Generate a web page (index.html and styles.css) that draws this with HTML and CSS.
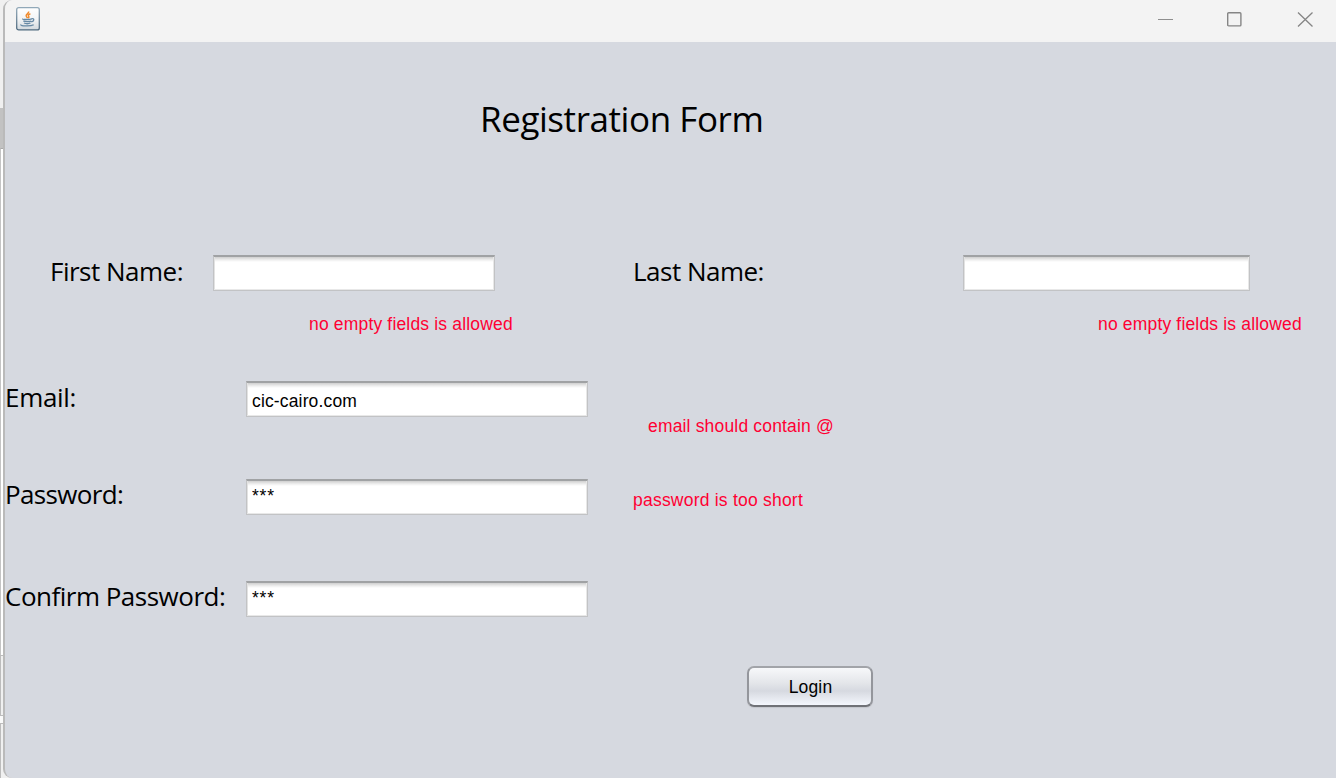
FILE: index.html
```html
<!DOCTYPE html>
<html lang="en">
<head>
<meta charset="utf-8">
<title>Registration Form</title>
<link rel="stylesheet" href="styles.css">
</head>
<body>
<div class="desktop">
  <div class="behind">
    <div class="behind-top"><i></i><i></i><i></i><i></i></div>
    <div class="behind-tab"></div>
    <div class="behind-editor"></div>
    <div class="behind-panel"></div>
    <div class="behind-gap"></div>
    <div class="behind-bottom"></div>
  </div>
  <div class="window">
    <header class="titlebar">
      <svg class="java" width="24" height="24" viewBox="0 0 24 24" fill="none">
        <defs>
          <linearGradient id="tile" x1="0" y1="0" x2="0" y2="1">
            <stop offset="0" stop-color="#ffffff"/><stop offset=".5" stop-color="#f3f5f6"/><stop offset="1" stop-color="#d2d9de"/>
          </linearGradient>
          <linearGradient id="edge" x1="0" y1="0" x2="0" y2="1">
            <stop offset="0" stop-color="#91a8b8"/><stop offset="1" stop-color="#4e697e"/>
          </linearGradient>
        </defs>
        <rect x=".7" y=".7" width="22.6" height="22.2" rx="2" fill="url(#tile)" stroke="url(#edge)" stroke-width="1.3"/>
        <path d="M12.600 4.500c.8 2-3.600 2.900-2.300 4.800l1.300 1.900M14.400 6.800c-2 .8-2.700 1.400-1.700 2.500.5.700.2 1.300-.4 1.900" stroke="#f08a2c" stroke-width="1.500"/>
        <path d="M7 11.800c-2 .8 6 1 9 .1M7.300 14c1.500.8 6 .7 8 .1M8 16c1.500.7 5 .7 6.500 0M15.500 11.600c3.400-.5 2.700 2.600-.2 3.300M5.200 17.600c-2 1.500 9.500 2 12.500.2" stroke="#6689a5" stroke-width="1.300"/>
      </svg>
      <div class="controls">
        <svg width="16" height="16" viewBox="0 0 16 16"><path d="M1 8.500h15" stroke="#8e8e8e"/></svg>
        <svg width="16" height="16" viewBox="0 0 16 16"><rect x="1.700" y="1.700" width="13.200" height="13.200" rx="1" fill="none" stroke="#858585" stroke-width="1.400"/></svg>
        <svg width="16" height="16" viewBox="0 0 16 16"><path d="M1 1.500l14.500 14M15.500 1.500L1 15.500" stroke="#858585" stroke-width="1.300"/></svg>
      </div>
    </header>
    <form class="form">
      <h1 class="title">Registration Form</h1>
      <div class="row names">
        <label class="label first-label" for="first">First Name:</label>
        <input class="field first" id="first" type="text">
        <label class="label last-label" for="last">Last Name:</label>
        <input class="field last" id="last" type="text">
      </div>
      <div class="row name-errors">
        <span class="error first-error">no empty fields is allowed</span>
        <span class="error last-error">no empty fields is allowed</span>
      </div>
      <div class="row email">
        <label class="label side email-label" for="email">Email:</label>
        <input class="field wide" id="email" type="text" value="cic-cairo.com">
        <span class="error email-error">email should contain @</span>
      </div>
      <div class="row password">
        <label class="label side password-label" for="password">Password:</label>
        <input class="field wide masked" id="password" type="text" value="***">
        <span class="error password-error">password is too short</span>
      </div>
      <div class="row confirm">
        <label class="label side confirm-label" for="confirm">Confirm Password:</label>
        <input class="field wide masked" id="confirm" type="text" value="***">
      </div>
      <button class="login" type="button">Login</button>
    </form>
  </div>
</div>
</body>
</html>
```
FILE: styles.css
```css
* { box-sizing: border-box; }
body { margin: 0; overflow: hidden; font: 17.5px/22px "Liberation Sans", Arial, sans-serif; color: #000; }
.desktop { display: flex; width: 1336px; height: 778px; background: linear-gradient(90deg, #f0f0f0 50%, #d6d9e0 50%); }
.behind { display: flex; flex-direction: column; width: 4px; flex: none; background: #f0f0f0; }
.behind-top { height: 108px; padding: 61px 0 0 3px; display: flex; flex-direction: column; gap: 4px; }
.behind-top i { width: 1px; height: 2px; background: #999; }
.behind-tab { height: 40px; background: #c2c2c2; }
.behind-editor { height: 507px; background: #fff; border-top: 1px solid #aaa; border-left: 1px solid #c4c4c4; }
.behind-panel { height: 61px; border: solid #bcbcbc; border-width: 1px 0 1px 1px; }
.behind-gap { height: 7px; background: #fafafa; }
.behind-bottom { flex: 1; border: solid #bcbcbc; border-width: 1px 0 0 1px; }
.window { width: 1333px; flex: none; margin-left: -1px; display: flex; flex-direction: column; border-left: 2px solid #bababa; border-radius: 9px 0 0 9px; background: #d6d9e0; overflow: hidden; }
.titlebar { height: 42px; flex: none; display: flex; justify-content: space-between; padding: 7px 23px 0 11px; background: #f3f3f3; }
.controls { display: flex; gap: 54px; padding-top: 4px; }
.controls svg:first-child { margin-right: -1px; }
.controls svg:last-child { margin-left: 1px; }
.form { flex: 1; display: flex; flex-direction: column; align-items: flex-start; }
.title { margin: 52px 0 0 475px; font: 400 35px/50px "Open Sans", "Noto Sans", sans-serif; letter-spacing: -.43px; white-space: nowrap; }
.row { display: flex; align-items: flex-start; }
.label { flex: none; margin-top: -1px; font: 400 26px/34px "Open Sans", "Noto Sans", sans-serif; letter-spacing: -.5px; white-space: nowrap; }
.field { flex: none; height: 36px; padding: 5px 4px 1px 5px; border: 1px solid #c2c3c5; border-top: 2px solid #a0a2a4; border-radius: 0; background: linear-gradient(#cfcfcf, #efefef 3px, #fff 5px); box-shadow: inset -1px -1px #e8e8e8, inset 1px 0 #e2e2e2; font: 17.5px/22px "Liberation Sans", Arial, sans-serif; letter-spacing: .15px; color: #000; outline: none; }
.names { margin-top: 111px; }
.first-label { width: 163px; margin-left: 45px; }
.first { width: 282px; }
.last-label { width: 330px; margin-left: 138px; }
.last { width: 287px; }
.error { flex: none; color: #ff0033; letter-spacing: .17px; white-space: nowrap; }
.name-errors { margin: 22px 0 0 304px; }
.first-error { width: 789px; }
.email { margin-top: 46px; }
.side { width: 241px; }
.wide { width: 342px; }
.masked { padding: 2px 4px 4px 5px; letter-spacing: .8px; }
.email-label { letter-spacing: -.3px; }
.password-label { margin-top: -2px; letter-spacing: -.65px; }
.confirm-label { margin-top: -2px; }
.email-error { margin: 34px 0 0 60px; }
.password { margin-top: 42px; }
.password-error { margin: 10px 0 0 45px; letter-spacing: .22px; }
.confirm { margin-top: 66px; }
.login { width: 126px; height: 41px; margin: 49px 0 0 742px; padding: 1px 0 0 1px; border: 2px solid; border-color: #a2a4a9 #94969c #707277; border-radius: 7px; background: linear-gradient(#f7f8fa, #e4e6ea 40%, #d6d9e0 62%, #f4f7fd); box-shadow: 0 1px 1px #c4c6cc; font: 17.5px/22px "Liberation Sans", Arial, sans-serif; letter-spacing: .15px; color: #000; }
```
